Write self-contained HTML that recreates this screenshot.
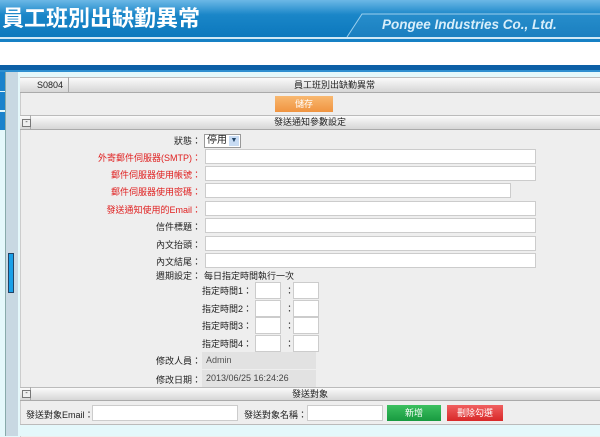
<!DOCTYPE html>
<html><head><meta charset="utf-8"><style>
*{margin:0;padding:0;box-sizing:border-box}
body{width:600px;height:436px;overflow:hidden;background:#e4f8fb;font-family:"Liberation Sans","Noto Sans CJK TC",sans-serif;font-size:9px;color:#222;position:relative}
.a{position:absolute}
.hdr{left:0;top:0;width:600px;height:37px;background:linear-gradient(#6cb8e6,#1a86c8 40%,#0c78bd)}
.title{left:2px;top:4px;color:#fff;font-size:22px;font-weight:bold;font-family:"Noto Sans CJK TC",sans-serif;line-height:26px}
.co{left:382px;top:17px;color:#d8eefa;font-size:13.5px;font-style:italic;font-weight:bold}
.in{background:#fff;border:1px solid #ccc}
.lab{text-align:right;width:196px;left:5px}
.red{color:#e02020}
.bar{background:linear-gradient(#fafafa,#d6d6d6);border-top:1px solid #bbb;border-bottom:1px solid #aaa}
.tog{width:9px;height:8px;border:1px solid #777;background:#eee;font-size:7px;line-height:6px;text-align:center}
</style></head><body>
<div class="a hdr"></div>
<svg class="a" style="left:340px;top:12px" width="260" height="26"><path d="M7 25 L22 2 L260 2 L260 25Z" fill="rgba(255,255,255,0.06)"/><path d="M7 25 L22 2 L260 2" stroke="#9dd0ee" fill="none" stroke-width="1"/></svg>
<div class="a title">員工班別出缺勤異常</div>
<div class="a co">Pongee Industries Co., Ltd.</div>
<div class="a" style="left:0;top:37px;width:600px;height:2px;background:#cfe8f6"></div>
<div class="a" style="left:0;top:39px;width:600px;height:3px;background:#1780c4"></div>
<div class="a" style="left:0;top:42px;width:600px;height:23px;background:#fff"></div>
<div class="a" style="left:0;top:65px;width:600px;height:5px;background:#0c5fa6"></div>
<div class="a" style="left:0;top:70px;width:600px;height:2px;background:#2e8fd0"></div>
<div class="a" style="left:0;top:72px;width:5px;height:19px;background:#1a82cc"></div>
<div class="a" style="left:0;top:92px;width:5px;height:18px;background:#1a82cc"></div>
<div class="a" style="left:0;top:112px;width:5px;height:18px;background:#1a82cc"></div>
<div class="a" style="left:5px;top:72px;width:13px;height:364px;background:#c8d8e2;border-left:1px solid #8aa"></div>
<div class="a" style="left:8px;top:253px;width:6px;height:40px;background:#1aa0e8;border:1px solid #246"></div>
<div class="a" style="left:20px;top:77px;width:580px;height:360px;background:#eeeeee;border-left:1px solid #ccc"></div>
<div class="a bar" style="left:20px;top:77px;width:580px;height:16px"></div>
<div class="a" style="left:20px;top:77px;width:49px;height:16px;border-right:1px solid #aaa;line-height:16px;padding-left:17px;font-size:9px">S0804</div>
<div class="a" style="left:69px;top:77px;width:531px;line-height:16px;text-align:center">員工班別出缺勤異常</div>
<div class="a" style="left:275px;top:96px;width:58px;height:16px;background:linear-gradient(#f8b870,#f09440);color:#fff;text-align:center;line-height:16px">儲存</div>
<div class="a bar" style="left:20px;top:115px;width:580px;height:15px"></div>
<div class="a" style="left:20px;top:115px;width:11px;height:15px;border-right:1px solid #aaa"></div>
<div class="a tog" style="left:22px;top:119px">-</div>
<div class="a" style="left:20px;top:115px;width:580px;line-height:15px;text-align:center">發送通知參數設定</div>

<div class="a lab" style="top:135px;line-height:12px">狀態：</div>
<div class="a" style="left:204px;top:134px;width:37px;height:14px;background:#fff;border:1px solid #999;font-size:10px;line-height:12px;padding-left:2px">停用<span style="position:absolute;right:1px;top:1px;width:10px;height:10px;background:#c8dcf4;color:#246;font-size:7px;line-height:10px;text-align:center">▼</span></div>

<div class="a lab red" style="top:151px">外寄郵件伺服器(SMTP)：</div><div class="a in" style="left:205px;top:149px;width:331px;height:15px"></div>
<div class="a lab red" style="top:168px">郵件伺服器使用帳號：</div><div class="a in" style="left:205px;top:166px;width:331px;height:15px"></div>
<div class="a lab red" style="top:185px">郵件伺服器使用密碼：</div><div class="a in" style="left:205px;top:183px;width:306px;height:15px"></div>
<div class="a lab red" style="top:203px">發送通知使用的Email：</div><div class="a in" style="left:205px;top:201px;width:331px;height:15px"></div>
<div class="a lab" style="top:220px">信件標題：</div><div class="a in" style="left:205px;top:218px;width:331px;height:15px"></div>
<div class="a lab" style="top:238px">內文抬頭：</div><div class="a in" style="left:205px;top:236px;width:331px;height:15px"></div>
<div class="a lab" style="top:255px">內文結尾：</div><div class="a in" style="left:205px;top:253px;width:331px;height:15px"></div>
<div class="a lab" style="top:269px">週期設定：</div><div class="a" style="left:204px;top:269px">每日指定時間執行一次</div>

<div class="a" style="left:200px;top:284px;width:52px;text-align:right">指定時間1：</div><div class="a in" style="left:255px;top:282px;width:26px;height:17px"></div><div class="a" style="left:285px;top:284px">：</div><div class="a in" style="left:293px;top:282px;width:26px;height:17px"></div>
<div class="a" style="left:200px;top:302px;width:52px;text-align:right">指定時間2：</div><div class="a in" style="left:255px;top:300px;width:26px;height:17px"></div><div class="a" style="left:285px;top:302px">：</div><div class="a in" style="left:293px;top:300px;width:26px;height:17px"></div>
<div class="a" style="left:200px;top:319px;width:52px;text-align:right">指定時間3：</div><div class="a in" style="left:255px;top:317px;width:26px;height:17px"></div><div class="a" style="left:285px;top:319px">：</div><div class="a in" style="left:293px;top:317px;width:26px;height:17px"></div>
<div class="a" style="left:200px;top:337px;width:52px;text-align:right">指定時間4：</div><div class="a in" style="left:255px;top:335px;width:26px;height:17px"></div><div class="a" style="left:285px;top:337px">：</div><div class="a in" style="left:293px;top:335px;width:26px;height:17px"></div>

<div class="a lab" style="top:354px">修改人員：</div><div class="a" style="left:202px;top:352px;width:114px;height:17px;background:#e2e2e2;color:#555;line-height:17px;padding-left:4px">Admin</div>
<div class="a lab" style="top:373px">修改日期：</div><div class="a" style="left:202px;top:370px;width:114px;height:17px;background:#e2e2e2;color:#444;line-height:17px;padding-left:4px">2013/06/25 16:24:26</div>

<div class="a bar" style="left:20px;top:387px;width:580px;height:14px"></div>
<div class="a" style="left:20px;top:387px;width:11px;height:14px;border-right:1px solid #aaa"></div>
<div class="a tog" style="left:22px;top:390px">-</div>
<div class="a" style="left:20px;top:387px;width:580px;line-height:14px;text-align:center">發送對象</div>
<div class="a" style="left:26px;top:408px">發送對象Email：</div><div class="a in" style="left:92px;top:405px;width:146px;height:16px"></div>
<div class="a" style="left:244px;top:408px">發送對象名稱：</div><div class="a in" style="left:307px;top:405px;width:76px;height:16px"></div>
<div class="a" style="left:387px;top:405px;width:54px;height:16px;background:linear-gradient(#3cc060,#189a40);color:#fff;text-align:center;line-height:16px">新增</div>
<div class="a" style="left:447px;top:405px;width:56px;height:16px;background:linear-gradient(#f06060,#d82828);color:#fff;text-align:center;line-height:16px">刪除勾選</div>
<div class="a" style="left:20px;top:424px;width:580px;height:1px;background:#bbb"></div>
<div class="a" style="left:20px;top:425px;width:580px;height:11px;background:#e4f8fb"></div>
</body></html>
